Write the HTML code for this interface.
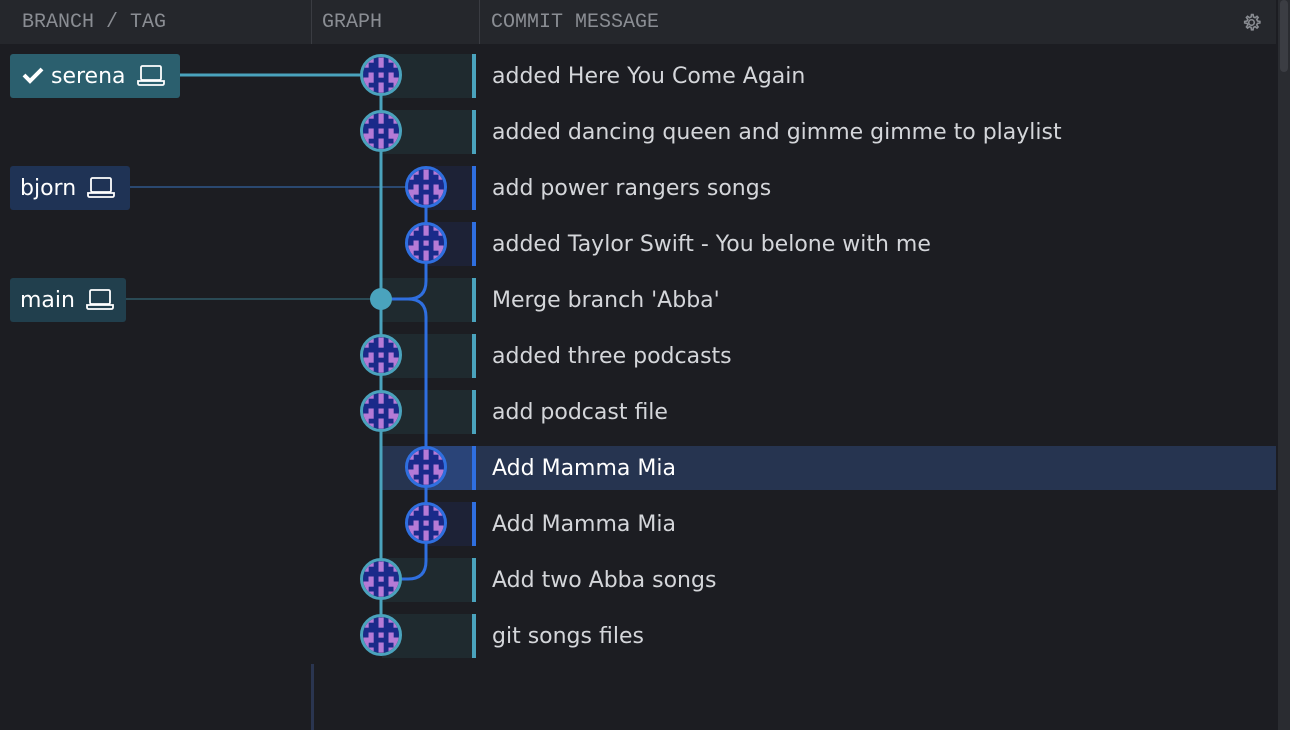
<!DOCTYPE html>
<html><head><style>
body{margin:0;width:1290px;height:730px;background:#1c1d22;overflow:hidden;position:relative;font-family:"DejaVu Sans","Liberation Sans",sans-serif}
.hdr{position:absolute;left:0;top:0;width:1276px;height:44px;background:#25272c}
.h{position:absolute;top:11px;font-family:"Liberation Mono",monospace;font-size:20px;color:#8a8d93}
.div{position:absolute;top:0;width:1px;height:44px;background:#3a3c42}
.band{position:absolute;height:44px;left:382px;width:90px}
.bar{position:absolute;height:44px;left:472px;width:4px}
.msg{position:absolute;left:492px;font-size:22px;color:#d4d6da;line-height:46px;white-space:nowrap}
.lab{position:absolute;left:10px;height:44px;border-radius:3px;color:#fff;font-size:22px;line-height:46px;padding-left:10px;box-sizing:border-box;white-space:nowrap}
.sb{position:absolute;right:0;top:0;width:12px;height:730px;background:#2a2c31}
</style></head><body>
<div class="hdr"></div>
<div class="h" style="left:22px">BRANCH / TAG</div>
<div class="h" style="left:322px">GRAPH</div>
<div class="h" style="left:491px">COMMIT MESSAGE</div>
<div class="div" style="left:311px"></div><div class="div" style="left:479px"></div>
<svg style="position:absolute;left:1242px;top:13px" width="19" height="19" viewBox="0 0 24 24"><path d="M12 2l2 0 .5 3 2 1 2.5-1.8 1.4 1.4-1.8 2.5 1 2 3 .5v2l-3 .5-1 2 1.8 2.5-1.4 1.4-2.5-1.8-2 1-.5 3h-2l-.5-3-2-1-2.5 1.8-1.4-1.4 1.8-2.5-1-2-3-.5v-2l3-.5 1-2-1.8-2.5 1.4-1.4 2.5 1.8 2-1 .5-3z" fill="none" stroke="#8a8d93" stroke-width="2"/><circle cx="12" cy="12" r="3.5" fill="none" stroke="#8a8d93" stroke-width="2"/></svg>
<div class="sb"><div style="margin:0 2px;width:8px;height:72px;background:#3b3d43;border-radius:4px"></div></div>
<div style="position:absolute;left:311px;top:664px;width:3px;height:66px;background:#2a3550"></div>
<div id="rows"></div>
<svg id="g" style="position:absolute;left:0;top:0" width="1290" height="730"></svg>
<div class="lab" style="top:54px;width:170px;background:#2b5f6e"><svg width="22" height="18" viewBox="0 0 22 18" style="vertical-align:-1px;margin-left:2px"><path d="M2 9l6 6L20 3" fill="none" stroke="#fff" stroke-width="4"/></svg> serena<span class="lt"></span></div>
<div class="lab" style="top:166px;width:120px;background:#1f3355">bjorn<span class="lt"></span></div>
<div class="lab" style="top:278px;width:116px;background:#213f4d">main<span class="lt"></span></div>
<script>
var msgs=["added Here You Come Again","added dancing queen and gimme gimme to playlist","add power rangers songs","added Taylor Swift - You belone with me","Merge branch 'Abba'","added three podcasts","add podcast file","Add Mamma Mia","Add Mamma Mia","Add two Abba songs","git songs files"];
var blue=[2,3,7,8];var h="";
msgs.forEach(function(m,i){var t=54+56*i;var b=blue.indexOf(i)>=0;
if(i==7)h+='<div style="position:absolute;left:382px;top:'+(t)+'px;width:894px;height:44px;background:#263450"></div>';
h+='<div class="band" style="top:'+t+'px;background:'+(i==7?'#2a4478':b?'#1d2236':'#1f2a2f')+';left:'+(b?426:382)+'px;width:'+(b?46:90)+'px"></div>';
h+='<div class="bar" style="top:'+t+'px;background:'+(b?'#2f6fe0':'#4aa3bd')+'"></div>';
h+='<div class="msg" style="top:'+t+'px;'+(i==7?'color:#fff':'')+'">'+m+'</div>';});
document.getElementById('rows').innerHTML=h;
var T='#4aa3bd',B='#2f6fe0';
var s='<line x1="180" y1="75" x2="381" y2="75" stroke="'+T+'" stroke-width="3"/>';
s+='<line x1="130" y1="187" x2="410" y2="187" stroke="#2a4870" stroke-width="2"/>';
s+='<line x1="126" y1="299" x2="381" y2="299" stroke="#2a4a55" stroke-width="2"/>';
s+='<line x1="381" y1="75" x2="381" y2="635" stroke="'+T+'" stroke-width="3"/>';
s+='<path d="M426 187V281Q426 299 408 299H381" fill="none" stroke="'+B+'" stroke-width="3"/>';
s+='<path d="M395 299H408Q426 299 426 317V561Q426 579 408 579H381" fill="none" stroke="'+B+'" stroke-width="3"/>';
s+='<circle cx="381" cy="299" r="11" fill="'+T+'"/>';
var pat=["PPNPNPP","PNNPNNP","NNNNNNN","NPNPNPN","PPNNNPP","PNNPNNP","PPNPNPP"];
function av(cx,cy,c){var r='<clipPath id="c'+cx+cy+'"><circle cx="'+cx+'" cy="'+cy+'" r="18"/></clipPath><g clip-path="url(#c'+cx+cy+')"><rect x="'+(cx-18)+'" y="'+(cy-18)+'" width="36" height="36" fill="#1a2a8a"/>';
for(var y=0;y<7;y++)for(var x=0;x<7;x++)if(pat[y][x]=='P')r+='<rect x="'+(cx-17.5+x*5)+'" y="'+(cy-17.5+y*5)+'" width="5.2" height="5.2" fill="#b57ad6"/>';
return r+'</g><circle cx="'+cx+'" cy="'+cy+'" r="19.5" fill="none" stroke="'+c+'" stroke-width="3"/>';}
for(var i=0;i<11;i++){if(i==4)continue;var b=blue.indexOf(i)>=0;s+=av(b?426:381,75+56*i,b?B:T);}
document.getElementById('g').innerHTML=s;
var lt='<svg width="30" height="22" viewBox="0 0 30 22" style="vertical-align:-3px;margin-left:10px"><rect x="5" y="2" width="20" height="14" rx="1.5" fill="none" stroke="#fff" stroke-width="1.8"/><path d="M2 17h26v2.5a1.5 1.5 0 0 1-1.5 1.5h-23A1.5 1.5 0 0 1 2 19.5z" fill="none" stroke="#fff" stroke-width="1.8"/></svg>';
document.querySelectorAll('.lt').forEach(function(e){e.innerHTML=lt;});
</script>
</body></html>
